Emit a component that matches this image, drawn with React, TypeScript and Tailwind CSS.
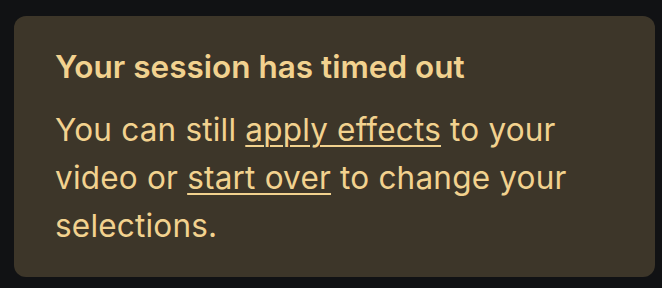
export default function App() {
  return (
    <div className="w-[662px] h-[288px] bg-[#111214] pt-[16px] pl-[14px]" style={{ fontFamily: '"Inter", "Noto Sans", sans-serif' }}>
      <div className="w-[641px] h-[261px] rounded-[12px] bg-[#3d3629] pl-[41px] pr-[60px] pt-[33px] text-[#f2d28f]">
        <h2 className="text-[31.5px] leading-[36px] font-semibold">Your session has timed out</h2>
        <p className="mt-[21px] text-[31.5px] leading-[48px] tracking-[0.2px]">
          You can still <a className="underline decoration-2 underline-offset-4">apply effects</a> to your video or{' '}
          <a className="underline decoration-2 underline-offset-4">start over</a> to change your selections.
        </p>
      </div>
    </div>
  );
}
